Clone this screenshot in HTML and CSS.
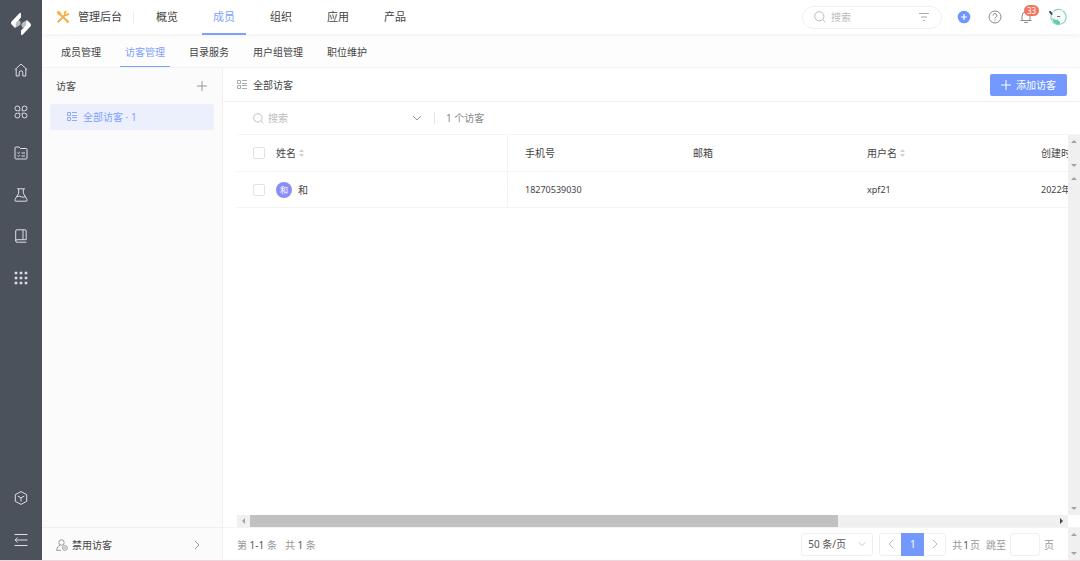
FILE: index.html
```html
<!DOCTYPE html>
<html lang="zh-CN">
<head>
<meta charset="utf-8">
<meta name="viewport" content="width=device-width, initial-scale=1">
<title>管理后台</title>
<link rel="stylesheet" href="styles.css">
</head>
<body>
<div class="app">
  <aside class="rail">
    <a class="logo" href="#" aria-label="首页">
      <svg width="22" height="24" viewBox="0 0 22 24"><path fill="#b9bcc0" d="M5 16l1-6.500 2-1.500q2.800.3 2.600 3.400-.1 1.300-1.400 2.200z"/><path fill="#b9bcc0" d="M17 8l-1 6.500-2 1.500q-2.800-.3-2.600-3.400.1-1.300 1.400-2.200z"/><path fill="#fff" d="M9.400 1.200Q11 .2 11 2v3.500L6.600 10q-1.300 1.300-.6 3.200L5 16 1.600 12.600q-1.400-1.500 0-3z"/><path fill="#fff" d="M12.600 22.800Q11 23.800 11 22v-3.500l4.400-4.500q1.300-1.300.6-3.200L17 8l3.400 3.400q1.400 1.500 0 3z"/></svg>
    </a>
    <nav class="rail-nav">
      <a href="#" aria-label="主页"><svg class="line" viewBox="0 0 14 14"><path d="M.8 6.800L7 1l6.200 5.800M2.200 5.800v7.200h3V9.600a1.800 1.800 0 0 1 3.600 0V13h3V5.800"/></svg></a>
      <a href="#" aria-label="工作台"><svg class="line" viewBox="0 0 14 14"><path d="M5.800 5.800H3.500A2.400 2.400 0 1 1 5.800 3.500zM8.200 5.800V3.500a2.400 2.400 0 1 1 2.300 2.300zM5.800 8.200v2.300a2.400 2.400 0 1 1-2.300-2.300zM8.200 8.200h2.300a2.400 2.400 0 1 1-2.300 2.300z"/></svg></a>
      <a href="#" aria-label="项目"><svg class="line" viewBox="0 0 14 14"><path d="M1 12V2q0-1 1-1h3l1.500 1.500H12q1 0 1 1V12q0 1-1 1H2q-1 0-1-1zM3.300 6.500l.9.900L5.800 6M3.300 9.600l.9.900 1.600-1.400M7.500 7H11M7.500 10H11"/></svg></a>
      <a href="#" aria-label="测试"><svg class="line" viewBox="0 0 14 14"><path d="M3 .8h8M4.700 1v4.200L1 11.500q-.6 1.700 1 1.700h10q1.600 0 1-1.700L9.300 5.200V1M3 8.500q2-1 4 .2t4.300 0"/></svg></a>
      <a href="#" aria-label="知识库"><svg class="line" viewBox="0 0 14 14"><path d="M12.300 13.200H3Q1.700 13.200 1.700 12V2Q1.700.8 3 .8h8q1.200 0 1.200 1.200v8.700H3q-1.300 0-1.300 1.200M9 1v9.500"/></svg></a>
      <a href="#" aria-label="更多"><svg class="solid" viewBox="0 0 14 14"><path d="M.7.700h2.600v2.600H.7zM5.700.700h2.600v2.600H5.700zM10.700.700h2.600v2.600h-2.600zM.7 5.700h2.600v2.600H.7zM5.700 5.700h2.600v2.600H5.700zM10.700 5.700h2.600v2.600h-2.600zM.7 10.700h2.600v2.600H.7zM5.700 10.700h2.600v2.600H5.700zM10.700 10.700h2.600v2.600h-2.600z"/></svg></a>
    </nav>
    <div class="rail-foot">
      <a href="#" aria-label="应用市场"><svg class="line" viewBox="0 0 14 14"><path d="M7 .6l5.700 3v6.800l-5.700 3-5.700-3V3.600zM3.700 5L7 6.900 10.300 5M7 6.900v3.600"/></svg></a>
      <button type="button" aria-label="收起菜单"><svg class="line" viewBox="0 0 14 14"><path d="M.5 1.500h13M1 7h12.500M.5 12.500h13M3.500 4.700L1 7l2.500 2.300"/></svg></button>
    </div>
  </aside>

  <div class="main">
    <header class="topbar">
      <svg class="tools" viewBox="0 0 14 14" fill="none" stroke="#f6b04f"><path stroke-width="2" d="M3.500 3.500L12 12M1.700 12.300L9 5"/><path stroke-width="1.800" d="M10.500 1.300Q8 2 8.900 4.200t3.900-.7"/><path fill="#f6b04f" stroke="none" d="M.7 2.200L2.200.7l2.600 1.500.6 2-1.200 1.200-2-.6zM9.500 10.800l1.500-1.500 2.300 2.400-1.600 1.600z"/></svg>
      <h1 class="brand">管理后台</h1>
      <nav class="tabs">
        <a href="#">概览</a><a href="#" class="on">成员</a><a href="#">组织</a><a href="#">应用</a><a href="#">产品</a>
      </nav>
      <div class="topsearch">
        <svg class="mag" viewBox="0 0 12 12"><circle cx="5.300" cy="5.300" r="4.600"/><path d="M8.700 8.700l2.600 2.600"/></svg>
        <input type="search" placeholder="搜索" aria-label="全局搜索">
        <button type="button" aria-label="筛选"><svg class="ico10" viewBox="0 0 10 10"><path d="M0 1.500h10M2 5h6M4 8.500h2"/></svg></button>
      </div>
      <div class="actions">
        <button type="button" aria-label="新建"><svg width="14" height="14" viewBox="0 0 14 14"><circle cx="7" cy="7" r="6.300" fill="#6f96ff"/><path d="M7 4v6M4 7h6" stroke="#fff" stroke-width="1.200"/></svg></button>
        <button type="button" aria-label="帮助"><svg width="14" height="14" viewBox="0 0 14 14" fill="none" stroke="#888"><circle cx="7" cy="7" r="6"/><path d="M5.100 5.500a1.900 1.900 0 1 1 2.600 1.700q-.7.300-.7 1.300M7 9.500v1.100"/></svg></button>
        <button type="button" class="bell" aria-label="通知"><svg width="14" height="14" viewBox="0 0 14 14" fill="none" stroke="#888"><path d="M1.500 10.500h11M3 10.500V6a4 4 0 0 1 8 0v4.500M7 .8v1.400M5.200 12.500h3.600"/></svg><span class="badge">33</span></button>
        <button type="button" aria-label="账户"><svg width="20" height="18" viewBox="0 0 20 18"><circle cx="10.500" cy="9" r="7.600" fill="#f7fbfa" stroke="#8bd5bf" stroke-width="1.200" stroke-dasharray="9 1"/><path d="M4 10q2.500 2.500 5 1.500l2.500 2 1 2.500q-6.500 1.500-8.500-6z" fill="#63c9a6"/><path d="M9 8.500h3.300" stroke="#777"/><path d="M1.500 3.500l1.500.3 1 3-1.400-1z" fill="#25476d" stroke="#25476d"/></svg></button>
      </div>
    </header>

    <nav class="subnav">
      <a href="#">成员管理</a><a href="#" class="on">访客管理</a><a href="#">目录服务</a><a href="#">用户组管理</a><a href="#">职位维护</a>
    </nav>

    <div class="body">
      <section class="groups">
        <div class="groups-head"><h2>访客</h2><button type="button" aria-label="添加分组"><svg class="ico10" viewBox="0 0 10 10"><path d="M5 0v10M0 5h10"/></svg></button></div>
        <a class="group" href="#"><svg class="ico10" viewBox="0 0 10 10"><path d="M.5.500h3v3h-3zM.5 5.500h3v3h-3zM5 .5h5M5 3.500h5M5 5.500h5M5 8.500h5"/></svg>全部访客 · 1</a>
        <a class="disabled-link" href="#"><svg class="user" viewBox="0 0 12 12"><circle cx="5.500" cy="3.500" r="2.700"/><path d="M.6 11.300q.2-4 3.600-5.300M.6 11.300H5"/><circle cx="8.900" cy="8.900" r="2.400"/><path d="M7.600 8.900h2.600"/></svg><span>禁用访客</span><svg class="chev" viewBox="0 0 6 10"><path d="M1 1l4 4-4 4"/></svg></a>
      </section>

      <section class="content">
        <div class="content-head">
          <svg class="ico10" viewBox="0 0 10 10"><path d="M.5.500h3v3h-3zM.5 5.500h3v3h-3zM5 .5h5M5 3.500h5M5 5.500h5M5 8.500h5"/></svg>
          <h2>全部访客</h2>
          <button type="button" class="primary"><svg class="ico10" viewBox="0 0 10 10"><path d="M5 0v10M0 5h10"/></svg>添加访客</button>
        </div>
        <div class="filter">
          <svg class="mag" viewBox="0 0 12 12"><circle cx="5.300" cy="5.300" r="4.600"/><path d="M8.700 8.700l2.600 2.600"/></svg>
          <input type="search" placeholder="搜索" aria-label="搜索访客">
          <button type="button" aria-label="展开筛选"><svg class="down" viewBox="0 0 10 6"><path d="M1 1l4 4 4-4"/></svg></button>
          <span class="count">1 个访客</span>
        </div>
        <div class="grid">
          <div class="grid-view">
            <table>
              <colgroup><col class="c-name"><col class="c-phone"><col class="c-mid"><col class="c-mid"><col></colgroup>
              <thead><tr>
                <th><div class="cell"><input type="checkbox" aria-label="全选">姓名<svg class="sort" viewBox="0 0 5 8"><path d="M2.500 0L5 3H0zM2.500 8L5 5H0z"/></svg></div></th>
                <th>手机号</th><th>邮箱</th>
                <th><div class="cell">用户名<svg class="sort" viewBox="0 0 5 8"><path d="M2.500 0L5 3H0zM2.500 8L5 5H0z"/></svg></div></th>
                <th>创建时间</th>
              </tr></thead>
              <tbody><tr>
                <td><div class="cell"><input type="checkbox" aria-label="选择 和"><span class="avatar">和</span>和</div></td>
                <td>18270539030</td><td></td><td>xpf21</td><td>2022年</td>
              </tr></tbody>
            </table>
          </div>
          <div class="vbars">
            <div class="vbar vbar-head"><i class="up"></i><i class="dn"></i></div>
            <div class="vbar vbar-body"><i class="up"></i><i class="dn"></i></div>
          </div>
        </div>
        <div class="hbar"><i class="lt"></i><div class="track"><div class="thumb"></div></div><i class="rt"></i></div>
        <footer class="pager">
          <p class="range">第 <b>1-1</b> 条</p><p>共 <b>1</b> 条</p>
          <div class="size"><select aria-label="每页条数"><option>50 条/页</option></select><svg class="down" viewBox="0 0 10 6"><path d="M1 1l4 4 4-4"/></svg></div>
          <div class="pages">
            <button type="button" aria-label="上一页"><svg class="chev" viewBox="0 0 6 10"><path d="M5 1L1 5l4 4"/></svg></button><button type="button" class="cur">1</button><button type="button" aria-label="下一页"><svg class="chev" viewBox="0 0 6 10"><path d="M1 1l4 4-4 4"/></svg></button>
          </div>
          <p class="total">共<b>1</b>页</p>
          <label class="jump">跳至<input type="text">页</label>
          <div class="vbar vbar-foot"><i class="up"></i><i class="dn"></i></div>
        </footer>
      </section>
    </div>
  </div>
</div>
</body>
</html>
```
FILE: styles.css
```css
* { box-sizing: border-box; }
body {
  margin: 0;
  font: 10px/16px "Noto Sans", "Noto Sans CJK SC", sans-serif;
  color: #444;
  background: #fff;
}
h1, h2, p { margin: 0; font-size: 10px; font-weight: 400; }
b { font-weight: 400; color: #555; }
a { color: inherit; text-decoration: none; }
svg { display: block; flex: none; }
button {
  display: flex; align-items: center; justify-content: center;
  padding: 0; border: 0; background: none; color: inherit; font: inherit;
}
input, select { margin: 0; padding: 0; border: 0; outline: 0; background: none; font: inherit; color: inherit; appearance: none; min-width: 0; }
input::placeholder { color: #bbb; }

.app { display: flex; height: 100vh; border-bottom: 1px solid #f0d5da; }

/* Navigation rail */
.rail { width: 42px; flex: none; display: flex; flex-direction: column; align-items: center; background: #4b525c; padding: 12px 0 13px; }
.rail-nav { display: flex; flex-direction: column; justify-content: space-between; height: 222px; margin-top: 27px; }
.rail-foot { display: flex; flex-direction: column; gap: 28px; margin-top: auto; }
.line, .solid { width: 14px; height: 14px; }
.line { fill: none; stroke: #dcdee0; stroke-width: 1; }
.solid { fill: #dcdee0; }

.main { flex: 1; min-width: 0; display: flex; flex-direction: column; }

/* Top bar */
.topbar { display: flex; align-items: center; height: 34px; flex: none; padding: 0 12px 0 14px; box-shadow: 0 1px 5px rgba(0,0,0,.06); position: relative; z-index: 1; }
.tools { width: 14px; height: 14px; }
.brand { font-size: 11px; margin-left: 8px; padding-right: 11px; line-height: 12px; border-right: 1px solid #eee; }
.tabs { display: flex; align-self: stretch; gap: 13px; margin-left: 11px; font-size: 11px; }
.tabs a { width: 44px; text-align: center; line-height: 33px; border-bottom: 1px solid transparent; }
.tabs .on, .subnav .on { color: #7f9fff; border-color: #7f9fff; }
.tabs .on { box-shadow: 0 1px #7f9fff; }
.topsearch { display: flex; align-items: center; width: 140px; height: 23px; margin-left: auto; padding: 0 12px 0 11px; border: 1px solid #f0f0f0; border-radius: 12px; }
.topsearch input { flex: 1; margin-left: 5px; height: 16px; }
.mag { width: 12px; height: 12px; fill: none; stroke: #bbb; }
.ico10 { width: 10px; height: 10px; fill: none; stroke: #aaa; }
.actions { display: flex; align-items: center; gap: 17px; margin-left: 15px; }
.actions button:last-child { margin-left: -2px; }
.bell { position: relative; }
.badge { position: absolute; left: 5px; top: -5px; min-width: 15px; height: 11px; border-radius: 6px; background: #f27560; color: #fff; font-size: 8px; line-height: 11px; text-align: center; }

.subnav { display: flex; gap: 14px; height: 34px; flex: none; padding: 0 14px; background: #fdfdfd; border-bottom: 1px solid #f3f3f3; }
.subnav a { padding: 2px 5px 0; line-height: 32px; border-bottom: 1px solid transparent; }

.body { flex: 1; min-height: 0; display: flex; }

/* Visitor groups */
.groups { width: 181px; flex: none; display: flex; flex-direction: column; background: #fbfbfb; border-right: 1px solid #f0f0f0; }
.groups-head { display: flex; align-items: center; justify-content: space-between; height: 36px; padding: 0 15px 0 14px; }
.groups-head .ico10 { stroke: #999; }
.group { display: flex; align-items: center; gap: 6px; height: 26px; margin: 0 8px; padding-left: 17px; border-radius: 3px; background: #ecf0fc; color: #7f9fff; }
.group .ico10 { stroke: #8ea9ff; }
.disabled-link { display: flex; align-items: center; gap: 4px; height: 33px; margin-top: auto; padding: 2px 22px 0 14px; border-top: 1px solid #f0f0f0; }
.disabled-link .chev { margin-left: auto; }
.user { width: 12px; height: 12px; fill: none; stroke: #999; }
.chev { width: 6px; height: 10px; fill: none; stroke: #999; }
.down { width: 10px; height: 6px; fill: none; stroke: #999; }

/* Visitor list */
.content { flex: 1; min-width: 0; display: flex; flex-direction: column; }
.content-head { display: flex; align-items: center; gap: 6px; height: 34px; flex: none; padding: 0 13px 0 14px; border-bottom: 1px solid #f0f0f0; }
.primary { gap: 5px; height: 22px; margin-left: auto; padding: 0 11px; border-radius: 2px; background: #7399ff; color: #fff; }
.primary .ico10 { stroke: #fff; }
.filter { display: flex; align-items: center; height: 33px; flex: none; margin-left: 14px; padding-left: 16px; border-bottom: 1px solid #f5f5f5; }
.filter .mag { width: 11px; height: 11px; }
.filter input { width: 144px; height: 16px; margin-left: 4px; }
.count { margin-left: 12px; padding-left: 11px; border-left: 1px solid #e5e5e5; line-height: 12px; color: #888; }
.grid { flex: 1; min-height: 0; display: flex; padding-left: 14px; }
.grid-view { flex: 1; min-width: 0; overflow: hidden; }
table { width: 1143px; table-layout: fixed; border-collapse: separate; border-spacing: 0; }
.c-name { width: 271px; }
.c-phone { width: 168px; }
.c-mid { width: 174px; }
th, td { height: 36px; padding: 0 17px; text-align: left; font-weight: 400; border-bottom: 1px solid #f3f3f3; white-space: nowrap; }
th { height: 37px; }
td { font-size: 9px; }
th:first-child, td:first-child { padding-left: 16px; border-right: 1px solid #f3f3f3; font-size: 10px; }
.cell { display: flex; align-items: center; }
.cell input { width: 12px; height: 12px; margin-right: 11px; border: 1px solid #e3e3e3; border-radius: 2px; background: #fff; }
.cell input:checked { background: #7399ff; }
.sort { width: 5px; height: 8px; margin-left: 3px; fill: #d0d0d0; }
.avatar { width: 16px; height: 16px; margin-right: 6px; border-radius: 50%; background: #8a8df5; color: #fff; font-size: 8px; line-height: 16px; text-align: center; }

/* Scroll bars */
.vbars { width: 12px; flex: none; display: flex; flex-direction: column; }
.vbar { width: 12px; flex: none; display: flex; flex-direction: column; align-items: center; justify-content: space-between; padding: 5px 0; background: #f0f0f0; }
.vbar-head { height: 37px; }
.vbar-body { flex: 1; }
.up, .dn, .lt, .rt { width: 0; height: 0; border: 3px solid transparent; }
.up { border-top: 0; border-bottom-color: #a3a3a3; }
.dn { border-bottom: 0; border-top-color: #a3a3a3; }
.lt { border-left: 0; border-right-color: #a3a3a3; }
.rt { border-right: 0; border-left-color: #444; }
.hbar { display: flex; align-items: center; gap: 5px; height: 12px; flex: none; margin: 0 12px 0 14px; padding: 0 5px; background: #f0f0f0; }
.track { flex: 1; align-self: stretch; }
.thumb { width: 73%; height: 100%; background: #c1c1c1; }

/* Pagination */
.pager { display: flex; align-items: center; height: 33px; flex: none; padding-left: 14px; border-top: 1px solid #f3f3f3; color: #999; }
.pager p, .jump { padding-top: 1px; }
.range { margin-right: 8px; }
.size { display: flex; align-items: center; width: 72px; height: 23px; margin-left: auto; padding: 0 6px; border: 1px solid #f0f0f0; border-radius: 3px; }
.size select { flex: 1; height: 16px; color: #555; }
.size .down { width: 8px; stroke: #bbb; }
.pages { display: flex; height: 23px; margin: 0 6px; border: 1px solid #f0f0f0; border-radius: 3px; }
.pages button { width: 21px; }
.pages .chev { stroke: #bbb; }
.pages .cur { width: 23px; margin: -1px 0; background: #7399ff; color: #fff; }
.total b { margin: 0 1px; }
.jump { display: flex; align-items: center; gap: 4px; margin: 0 14px 0 6px; }
.jump input { width: 30px; height: 23px; border: 1px solid #f0f0f0; border-radius: 3px; }
.vbar-foot { height: 32px; }
```
